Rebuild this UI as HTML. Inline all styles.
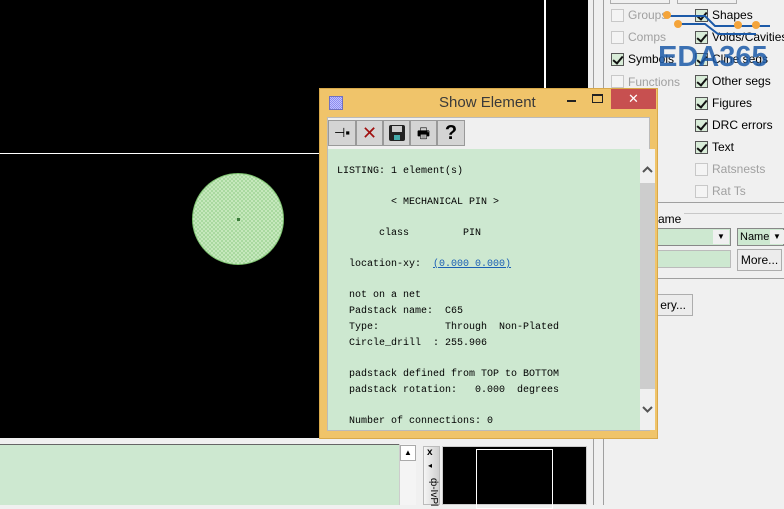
<!DOCTYPE html>
<html><head><meta charset="utf-8"><style>
*{margin:0;padding:0;box-sizing:border-box}
body{width:784px;height:505px;overflow:hidden;position:relative;background:#f0f0f0;font-family:"Liberation Sans",sans-serif;font-size:11px}
.a{position:absolute}
.mono{font-family:"Liberation Mono",monospace;font-size:10px;color:#000;white-space:pre;position:absolute}
.cb{position:absolute;width:13px;height:13px;border:1px solid #8e8f8f;background:#fff}
.cb.on{background:#d8ecd8;border-color:#555}
.cb.on::after{content:"";position:absolute;left:3px;top:0px;width:4px;height:8px;border:solid #111;border-width:0 2px 2px 0;transform:rotate(40deg)}
.cb.dis{background:#f4f4f4;border-color:#c8c8c8}
.lbl{position:absolute;font-size:12px;color:#000}
.lbl.dis{color:#a0a0a0}
.btn{position:absolute;background:#ececec;border:1px solid #adadad;font-size:12px;text-align:center}
</style></head><body>
<div class="a" style="left:0;top:0;width:588px;height:438px;background:#000"></div>
<div class="a" style="left:544px;top:0;width:2px;height:90px;background:#fff"></div>
<div class="a" style="left:0;top:153px;width:320px;height:1px;background:#fff"></div>
<div class="a" style="left:192px;top:173px;width:92px;height:92px;border-radius:50%;background:repeating-conic-gradient(#a9d9a0 0 25%,#c6e8bd 0 50%) 0 0/4px 4px;border:1px solid #7cc26e"></div>
<div class="a" style="left:237px;top:218px;width:3px;height:3px;background:#3a7a3a"></div>
<div class="a" style="left:593px;top:0;width:1px;height:505px;background:#a0a0a0"></div>
<div class="a" style="left:603px;top:0;width:1px;height:505px;background:#a0a0a0"></div>
<div class="a" style="left:610px;top:0;width:60px;height:4px;border:1px solid #adadad;border-top:none"></div>
<div class="a" style="left:677px;top:0;width:60px;height:4px;border:1px solid #adadad;border-top:none"></div>
<div class="cb dis" style="left:611px;top:9px"></div><div class="lbl dis" style="left:628px;top:8px">Groups</div>
<div class="cb dis" style="left:611px;top:31px"></div><div class="lbl dis" style="left:628px;top:30px">Comps</div>
<div class="cb on" style="left:611px;top:53px"></div><div class="lbl" style="left:628px;top:52px">Symbols</div>
<div class="cb dis" style="left:611px;top:75px"></div><div class="lbl dis" style="left:628px;top:75px">Functions</div>
<div class="cb on" style="left:695px;top:9px"></div><div class="lbl" style="left:712px;top:8px">Shapes</div>
<div class="cb on" style="left:695px;top:31px"></div><div class="lbl" style="left:712px;top:30px">Voids/Cavities</div>
<div class="cb on" style="left:695px;top:53px"></div><div class="lbl" style="left:712px;top:52px">Cline segs</div>
<div class="cb on" style="left:695px;top:75px"></div><div class="lbl" style="left:712px;top:74px">Other segs</div>
<div class="cb on" style="left:695px;top:97px"></div><div class="lbl" style="left:712px;top:96px">Figures</div>
<div class="cb on" style="left:695px;top:119px"></div><div class="lbl" style="left:712px;top:118px">DRC errors</div>
<div class="cb on" style="left:695px;top:141px"></div><div class="lbl" style="left:712px;top:140px">Text</div>
<div class="cb dis" style="left:695px;top:163px"></div><div class="lbl dis" style="left:712px;top:162px">Ratsnests</div>
<div class="cb dis" style="left:695px;top:185px"></div><div class="lbl dis" style="left:712px;top:184px">Rat Ts</div>
<div class="a" style="left:655px;top:202px;width:129px;height:1px;background:#a0a0a0"></div>
<div class="a" style="left:662px;top:213px;width:120px;height:1px;background:#c8c8c8"></div>
<div class="lbl" style="left:658px;top:212px;background:#f0f0f0;padding-right:3px">ame</div>
<div class="a" style="left:655px;top:228px;width:76px;height:18px;background:#cde8d0;border:1px solid #888"></div>
<div class="a" style="left:713px;top:230px;width:16px;height:14px;background:#f0f0f0;font-size:8px;text-align:center;line-height:14px">▼</div>
<div class="a" style="left:737px;top:228px;width:47px;height:18px;background:#cde8d0;border:1px solid #888;font-size:11px;padding-left:2px;line-height:16px">Name</div>
<div class="a" style="left:770px;top:230px;width:14px;height:14px;background:#f0f0f0;font-size:8px;text-align:center;line-height:14px">▼</div>
<div class="a" style="left:655px;top:250px;width:76px;height:18px;background:#cde8d0;border:1px solid #bbb"></div>
<div class="btn" style="left:737px;top:249px;width:45px;height:22px;line-height:20px">More...</div>
<div class="a" style="left:655px;top:278px;width:129px;height:1px;background:#a0a0a0"></div>
<div class="btn" style="left:640px;top:294px;width:53px;height:22px;line-height:20px;text-align:right;padding-right:6px">ery...</div>
<svg class="a" style="left:660px;top:8px" width="124" height="62">
<path d="M8 8 H45 L55 18 H110" stroke="#1c5aa8" stroke-width="2" fill="none"/>
<path d="M18 16 H45 L58 26 H96" stroke="#1c5aa8" stroke-width="2" fill="none"/>
<circle cx="7" cy="7" r="4" fill="#f4a43a"/><circle cx="18" cy="16" r="4" fill="#f4a43a"/>
<circle cx="78" cy="17" r="4" fill="#f4a43a"/><circle cx="96" cy="17" r="4" fill="#f4a43a"/>
<text x="-2" y="58" font-family="Liberation Sans" font-size="29" font-weight="bold" fill="#1c5aa8" fill-opacity="0.85">EDA365</text>
</svg>
<div class="a" style="left:0;top:444px;width:400px;height:61px;background:#cde8d0;border-top:1px solid #666"></div>
<div class="a" style="left:399px;top:444px;width:17px;height:61px;background:#f4f4f4;border-left:1px solid #ccc"></div>
<div class="a" style="left:400px;top:445px;width:16px;height:16px;background:#fff;border:1px solid #aaa;font-size:8px;text-align:center;line-height:14px">▲</div>
<div class="a" style="left:423px;top:446px;width:17px;height:59px;background:linear-gradient(90deg,#f5f5f5,#cfcfcf);border:1px solid #bbb"></div>
<div class="a" style="left:427px;top:447px;font-size:10px;font-weight:bold">x</div>
<div class="a" style="left:428px;top:461px;font-size:8px">◂</div>
<div class="a" style="left:439px;top:478px;font-size:10px;transform:rotate(90deg);transform-origin:left top">ф-IvPl</div>
<div class="a" style="left:442px;top:446px;width:145px;height:59px;background:#000;border:1px solid #ccc"></div>
<div class="a" style="left:476px;top:449px;width:77px;height:60px;border:1px solid #fff"></div>
<div class="a" style="left:319px;top:88px;width:339px;height:351px;background:#f0c46a;border:1px solid #d9a94a"></div>
<div class="a" style="left:329px;top:96px;width:14px;height:14px;background:repeating-conic-gradient(#8c8cf0 0 25%,#c0c0ff 0 50%) 0 0/2px 2px;border:1px solid #7070c0"></div>
<div class="a" style="left:439px;top:94px;font-size:15px;color:#3a3a3a">Show Element</div>
<div class="a" style="left:567px;top:100px;width:9px;height:2px;background:#222"></div>
<div class="a" style="left:592px;top:94px;width:11px;height:9px;border:1px solid #222;border-top-width:2px"></div>
<div class="a" style="left:611px;top:89px;width:45px;height:20px;background:#c75050;color:#fff;text-align:center;font-size:13px;line-height:20px">✕</div>
<div class="a" style="left:327px;top:117px;width:323px;height:314px;background:#f0f0f0;border:1px solid #bbb"></div>
<div class="a" style="left:328px;top:120px;width:28px;height:26px;background:#d4d4d4;border:1px solid #999;text-align:center;line-height:24px;font-size:13px">⊣▪</div>
<div class="a" style="left:356px;top:120px;width:27px;height:26px;background:#d4d4d4;border:1px solid #999;text-align:center;line-height:24px;font-size:18px;color:#a01010">✕</div>
<div class="a" style="left:383px;top:120px;width:27px;height:26px;background:#d4d4d4;border:1px solid #999"><div style="margin:4px 5px;width:16px;height:16px;background:#222;border-radius:2px;position:relative"><div style="position:absolute;left:3px;top:1px;width:10px;height:6px;background:#ccc"></div><div style="position:absolute;left:5px;top:10px;width:6px;height:5px;background:#4aa"></div></div></div>
<div class="a" style="left:410px;top:120px;width:27px;height:26px;background:#d4d4d4;border:1px solid #999;text-align:center;line-height:24px;font-size:14px">🖶</div>
<div class="a" style="left:437px;top:120px;width:28px;height:26px;background:#d4d4d4;border:1px solid #999;text-align:center;line-height:24px;font-size:20px;font-weight:bold">?</div>
<div class="a" style="left:328px;top:149px;width:312px;height:281px;background:#cde8d0"></div>
<div class="a" style="left:640px;top:149px;width:15px;height:281px;background:#f0f0f0"></div>
<div class="a" style="left:640px;top:183px;width:15px;height:206px;background:#cdcdcd"></div>
<svg class="a" style="left:640px;top:164px" width="15" height="12"><path d="M3 8 L7.5 3.5 L12 8" stroke="#555" stroke-width="2" fill="none"/></svg>
<svg class="a" style="left:640px;top:403px" width="15" height="12"><path d="M3 4 L7.5 8.5 L12 4" stroke="#555" stroke-width="2" fill="none"/></svg>
<div class="mono" style="left:337px;top:166px">LISTING: 1 element(s)</div>
<div class="mono" style="left:391px;top:197px">&lt; MECHANICAL PIN &gt;</div>
<div class="mono" style="left:379px;top:228px">class         PIN</div>
<div class="mono" style="left:349px;top:259px">location-xy:  <span style="color:#1a5fb4;text-decoration:underline">(0.000 0.000)</span></div>
<div class="mono" style="left:349px;top:290px">not on a net</div>
<div class="mono" style="left:349px;top:306px">Padstack name:  C65</div>
<div class="mono" style="left:349px;top:322px">Type:           Through  Non-Plated</div>
<div class="mono" style="left:349px;top:338px">Circle_drill  : 255.906</div>
<div class="mono" style="left:349px;top:369px">padstack defined from TOP to BOTTOM</div>
<div class="mono" style="left:349px;top:385px">padstack rotation:   0.000  degrees</div>
<div class="mono" style="left:349px;top:416px">Number of connections: 0</div>
</body></html>
